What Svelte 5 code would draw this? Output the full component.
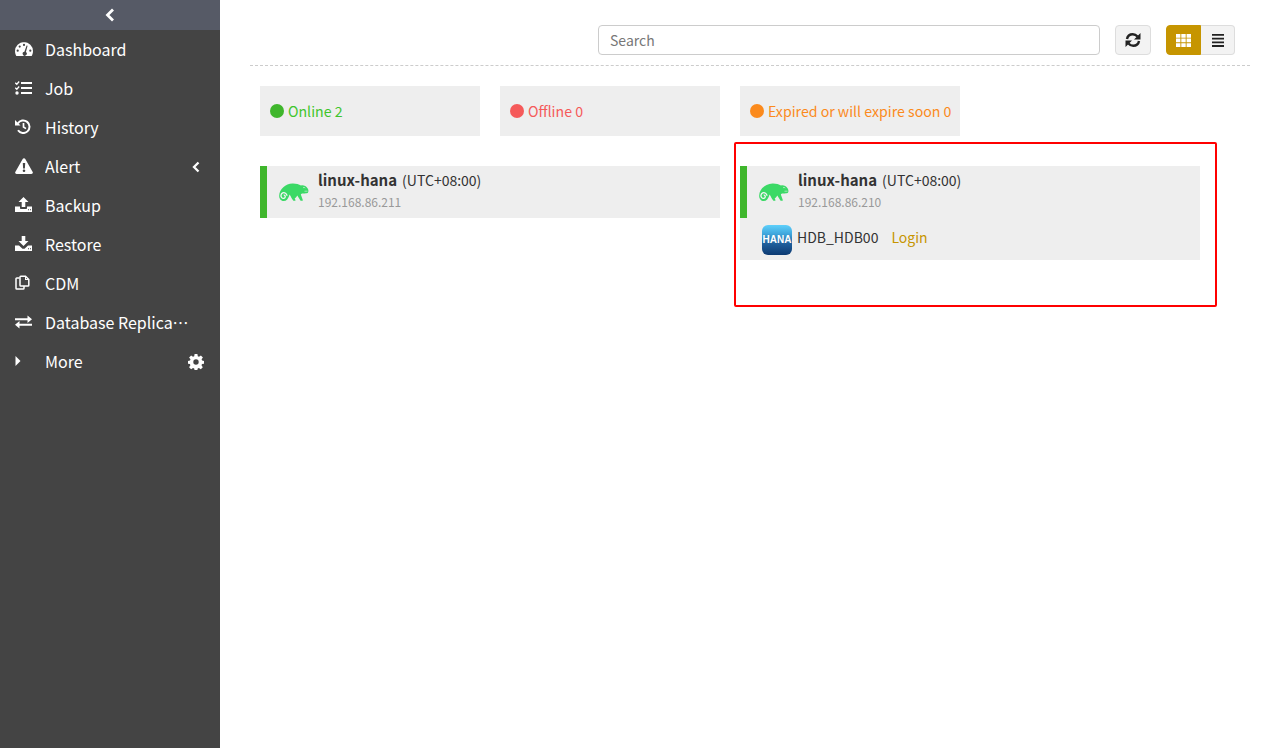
<script>
  const menu = [
    { label: 'Dashboard', icon: 'gauge' },
    { label: 'Job', icon: 'tasks' },
    { label: 'History', icon: 'history' },
    { label: 'Alert', icon: 'alert', caret: true },
    { label: 'Backup', icon: 'upload' },
    { label: 'Restore', icon: 'download' },
    { label: 'CDM', icon: 'copy' },
    { label: 'Database Replication', icon: 'swap' },
    { label: 'More', icon: 'more', gear: true }
  ];

  const stats = [
    { label: 'Online 2', color: '#3fb62c', text: '#3fc52c' },
    { label: 'Offline 0', color: '#f55a5a', text: '#f55a5a' },
    { label: 'Expired or will expire soon 0', color: '#fb8a1c', text: '#fb8a1c' }
  ];

  const hosts = [
    { name: 'linux-hana', zone: '(UTC+08:00)', ip: '192.168.86.211', apps: [] },
    { name: 'linux-hana', zone: '(UTC+08:00)', ip: '192.168.86.210', apps: ['HDB_HDB00'] }
  ];
</script>

{#snippet chameleon()}
  <svg class="gecko" viewBox="0 0 30 18" width="30" height="18" aria-hidden="true">
    <path fill="#3bd966" d="M.2 12.500C.4 6 6.500.8 13.500.5c3.500-.1 6.300.7 8.500 2 2.500-.6 5 .6 6.700 3 .9 1.300 1 3.200.2 4.300-.5.600-5.500.8-6.200.9-.8.200-1 .8-.6 1.600l1.700 4.600c.2.500 0 .8-.5.800h-1.700c-1.300-1.800-2.300-3.700-3.300-5.200-.7 1.300-1.500 2.200-2.600 3l.8 1.500c.2.400 0 .7-.5.700h-1.600c-1-1-1.900-2.600-2.600-4.200-.4-.9-.8-1.600-1.200-2.100C9.300 15.700 7.500 18 4.600 18 1.900 18 0 15.500.2 12.500z"/>
    <path fill="none" stroke="#f4f4f4" stroke-width="1.300" d="M8 12.800c-.2-2.300-2.400-3.700-4.300-2.900-1.900.8-2.300 3.300-1 4.700 1.100 1.200 3.100.9 3.500-.5.300-1.100-.5-2.200-1.500-1.900"/>
    <path fill="none" stroke="#eeeeee" stroke-width=".7" d="M24 4.800c.8-.5 1.500-.4 2.200.2"/>
    <path fill="none" stroke="#eeeeee" stroke-width=".6" d="M25.500 8.200h3"/>
  </svg>
{/snippet}

<div class="page">
  <aside class="sidebar">
    <div class="collapse">
      <svg viewBox="0 0 10 14" width="10" height="14" aria-hidden="true"><path d="M8 1.500 2.500 7 8 12.500" fill="none" stroke="#fff" stroke-width="2.800"/></svg>
    </div>
    <nav>
      {#each menu as item}
        <div class="item">
          <span class="icon">
            {#if item.icon === 'gauge'}
              <svg viewBox="0 0 18 14" width="18" height="14"><path fill="#fff" fill-rule="evenodd" d="M9 0a9 9 0 0 0-9 9c0 2 .6 3.600 1.300 5h15.400c.7-1.400 1.300-3 1.300-5a9 9 0 0 0-9-9zM9 1.800a1.100 1.100 0 1 1 0 2.200 1.100 1.100 0 0 1 0-2.200zM4.700 3.500a1.100 1.100 0 1 1 0 2.200 1.100 1.100 0 0 1 0-2.200zM2.700 7.600a1.100 1.100 0 1 1 0 2.200 1.100 1.100 0 0 1 0-2.200zM15.300 7.600a1.100 1.100 0 1 1 0 2.200 1.100 1.100 0 0 1 0-2.200zM11.600 3.400l1 .4-1.700 6.300a2 2 0 1 1-1.500-.4z"/></svg>
            {:else if item.icon === 'tasks'}
              <svg viewBox="0 0 17 14" width="17" height="14"><g fill="#fff"><path d="M6 1h11v2H6zM6 6h11v2H6zM6 11h11v2H6z"/><circle cx="2" cy="12" r="1.700"/></g><path d="M.3 1.800 1.800 3.200 4.200.5M.3 6.800 1.800 8.200 4.200 5.500" fill="none" stroke="#fff" stroke-width="1.300"/></svg>
            {:else if item.icon === 'history'}
              <svg viewBox="0 0 16 15" width="16" height="15"><path d="M2.800 4.500A6.300 6.300 0 1 1 3 11.300" fill="none" stroke="#fff" stroke-width="2"/><path fill="#fff" d="M0 1v5.500h5.500z"/><path d="M8.500 4v4l2.500 1.600" fill="none" stroke="#fff" stroke-width="1.700"/></svg>
            {:else if item.icon === 'alert'}
              <svg viewBox="0 0 18 16" width="18" height="16"><path fill="#fff" fill-rule="evenodd" d="M9 .2c.6 0 1 .3 1.300.8l7.400 12.900c.5 1-.2 2-1.300 2H1.600c-1.100 0-1.800-1-1.300-2L7.700 1c.3-.5.700-.8 1.300-.8zM7.800 5l.3 5.500h1.800l.3-5.500zM9 11.400a1.300 1.300 0 1 0 0 2.600 1.300 1.300 0 0 0 0-2.600z"/></svg>
            {:else if item.icon === 'upload'}
              <svg viewBox="0 0 17 15" width="17" height="15"><path fill="#fff" fill-rule="evenodd" d="M8.500 0 13.500 5H10.300v5H6.700V5H3.500zM0 9.500h5v1.500c0 .6.400 1 1 1h5c.6 0 1-.4 1-1V9.500h5V15H0zM13 12.200h1v1h-1zM15 12.200h1v1h-1z"/></svg>
            {:else if item.icon === 'download'}
              <svg viewBox="0 0 17 15" width="17" height="15"><path fill="#fff" fill-rule="evenodd" d="M6.700 0h3.600v5h3.200l-5 5-5-5h3.200zM0 9.500h4l3.500 3.300h2L13 9.500h4V15H0zM13 12.200h1v1h-1zM15 12.200h1v1h-1z"/></svg>
            {:else if item.icon === 'copy'}
              <svg viewBox="0 0 15 15" width="15" height="15"><path d="M4.500 3H1.800c-.5 0-.8.300-.8.800v9.400c0 .5.300.8.800.800h6.400c.5 0 .8-.3.800-.8V11" fill="none" stroke="#fff" stroke-width="1.500"/><path d="M5.800 1.200h4.700l3.300 3.300v5.700c0 .5-.3.800-.8.800H5.800c-.5 0-.8-.3-.8-.8V2c0-.5.300-.8.800-.8z" fill="none" stroke="#fff" stroke-width="1.500"/><path fill="#fff" d="M10 1h1v3h3v1h-4z"/></svg>
            {:else if item.icon === 'swap'}
              <svg viewBox="0 0 17 14" width="17" height="14"><path fill="#fff" d="M0 3.200h12.500V.5L17 4.300l-4.500 3.800V5.200H0zM17 8.800H4.500V6L0 9.800l4.500 3.700v-2.700H17z"/></svg>
            {:else}
              <svg class="tri" viewBox="0 0 6 10" width="6" height="10"><path fill="#fff" d="M.5 0 5.500 5 .5 10z"/></svg>
            {/if}
          </span>
          <span class="label">{item.label}</span>
          {#if item.caret}
            <svg class="caret" viewBox="0 0 8 12" width="8" height="12"><path d="M6.500 1.500 2 6l4.500 4.500" fill="none" stroke="#fff" stroke-width="2.300"/></svg>
          {/if}
          {#if item.gear}
            <svg class="gear" viewBox="0 0 16 16" width="16" height="16"><path fill="#fff" fill-rule="evenodd" d="M6.600 0h2.800l.4 2.200 1.200.5L12.900 1.400l2 2-1.300 1.900.5 1.200 1.900.4v2.800l-2 .4-.5 1.200 1.300 1.900-2 2-1.900-1.300-1.200.5-.4 2H6.600l-.4-2-1.200-.5-1.900 1.300-2-2 1.300-1.900-.5-1.200-1.900-.4V6.900l2-.4.500-1.200L1.100 3.400l2-2L5 2.700l1.200-.5zM8 5.300a2.700 2.700 0 1 0 0 5.400 2.700 2.700 0 0 0 0-5.400z"/></svg>
          {/if}
        </div>
      {/each}
    </nav>
  </aside>

  <main class="content">
    <div class="toolbar">
      <input class="search" type="text" placeholder="Search" />
      <button class="btn refresh" type="button" aria-label="Refresh">
        <svg viewBox="0 0 16 16" width="16" height="16"><g fill="none" stroke="#222" stroke-width="2.400"><path d="M2 7c.5-3 3-4.800 5.800-4.800 2 0 3.500.9 4.700 2.300"/><path d="M14 9c-.5 3-3 4.800-5.800 4.800-2 0-3.500-.9-4.700-2.300"/></g><path fill="#222" d="M15.500 1v6.500H9zM.5 15V8.500H7z"/></svg>
      </button>
      <div class="views">
        <button class="btn active" type="button" aria-label="Grid">
          <svg viewBox="0 0 15 13" width="15" height="13"><path fill="#fff" d="M0 0h4.400v3.700H0zM5.300 0h4.400v3.700H5.300zM10.600 0H15v3.700h-4.400zM0 4.600h4.400v3.700H0zM5.300 4.600h4.400v3.700H5.300zM10.600 4.600H15v3.700h-4.400zM0 9.200h4.400V13H0zM5.300 9.200h4.400V13H5.300zM10.600 9.200H15V13h-4.400z"/></svg>
        </button>
        <button class="btn" type="button" aria-label="List">
          <svg viewBox="0 0 12 13" width="12" height="13"><path fill="#222" d="M0 0h12v1.800H0zM0 3.700h12v1.800H0zM0 7.400h12v1.800H0zM0 11.100h12v1.800H0z"/></svg>
        </button>
      </div>
    </div>

    <div class="stats">
      {#each stats as s}
        <div class="stat" style:color={s.text}>
          <span class="dot" style:background={s.color}></span>{s.label}
        </div>
      {/each}
    </div>

    <div class="hosts">
      {#each hosts as h}
        <div class="host">
          <div class="head">
            {@render chameleon()}
            <div class="meta">
              <div class="title"><b>{h.name}</b><span>{h.zone}</span></div>
              <div class="ip">{h.ip}</div>
            </div>
          </div>
          {#each h.apps as app}
            <div class="app">
              <span class="hana">HANA</span>
              <span class="app-name">{app}</span>
              <a class="login" href="#login">Login</a>
            </div>
          {/each}
        </div>
      {/each}
    </div>
  </main>
  <div class="mark"></div>
</div>

<style>
  :global(body) {
    margin: 0;
    background: #fff;
  }

  .page {
    position: relative;
    display: flex;
    height: 748px;
    overflow: hidden;
    font-family: "Noto Sans CJK SC", "Noto Sans", sans-serif;
    font-size: 16px;
    color: #333;
  }

  .sidebar {
    flex: 0 0 220px;
    background: #444;
    color: #fff;
  }

  .collapse {
    height: 30px;
    background: #565a66;
    display: flex;
    align-items: center;
    justify-content: center;
  }

  .item {
    display: flex;
    align-items: center;
    height: 39px;
    box-sizing: border-box;
    padding: 0 0 2px 15px;
    position: relative;
  }

  .icon {
    flex: 0 0 30px;
    display: flex;
    align-items: center;
  }

  .label {
    width: 145px;
    white-space: nowrap;
    overflow: hidden;
    text-overflow: ellipsis;
  }

  .caret {
    position: absolute;
    left: 192px;
    top: 14px;
  }

  .gear {
    position: absolute;
    left: 188px;
    top: 12px;
  }

  .content {
    flex: 1;
    min-width: 0;
    padding: 25px 27px 0 30px;
  }

  .toolbar {
    display: flex;
    height: 41px;
    width: 1000px;
    padding-right: 15px;
    box-sizing: border-box;
    justify-content: flex-end;
    align-items: flex-start;
    border-bottom: 1px dashed #ccc;
  }

  .search {
    width: 502px;
    height: 30px;
    box-sizing: border-box;
    border: 1px solid #ccc;
    border-radius: 4px;
    padding: 0 11px;
    font: inherit;
    font-size: 14px;
    outline: none;
  }

  .search::placeholder {
    color: #777;
    opacity: 1;
  }

  .btn {
    width: 35px;
    height: 30px;
    box-sizing: border-box;
    padding: 0;
    border: 1px solid #ddd;
    background: #f3f3f3;
    display: flex;
    align-items: center;
    justify-content: center;
  }

  .refresh {
    width: 36px;
    margin-left: 15px;
    border-radius: 4px;
  }

  .views {
    display: flex;
    margin-left: 15px;
  }

  .views .btn:first-child {
    border-radius: 4px 0 0 4px;
  }

  .views .btn:last-child {
    width: 34px;
    border-left: 0;
    border-radius: 0 4px 4px 0;
  }

  .btn.active {
    background: #c69500;
    border-color: #c69500;
  }

  .stats {
    display: flex;
    gap: 20px;
    margin: 20px 0 0 10px;
  }

  .stat {
    width: 220px;
    height: 50px;
    background: #eee;
    display: flex;
    align-items: center;
    padding-left: 10px;
    box-sizing: border-box;
    font-size: 14.15px;
    white-space: nowrap;
  }

  .dot {
    flex: none;
    width: 14px;
    height: 14px;
    border-radius: 50%;
    margin-right: 4px;
  }

  .hosts {
    display: flex;
    gap: 20px;
    align-items: flex-start;
    margin: 30px 0 0 10px;
  }

  .host {
    width: 460px;
    background: #eee;
  }

  .head {
    height: 52px;
    box-sizing: border-box;
    border-left: 7px solid #3fb62c;
    display: flex;
    align-items: flex-start;
    padding-left: 12px;
  }

  .gecko {
    margin-top: 17px;
    flex: none;
  }

  .meta {
    margin-left: 9px;
  }

  .title {
    height: 26px;
    line-height: 28px;
    font-size: 14px;
    white-space: nowrap;
  }

  .title b {
    font-size: 15px;
    font-weight: 700;
    margin-right: 5px;
  }

  .ip {
    margin-top: 2px;
    font-size: 12px;
    line-height: 16px;
    color: #999;
  }

  .app {
    height: 42px;
    box-sizing: border-box;
    padding: 7px 0 0 22px;
    display: flex;
    align-items: flex-start;
    font-size: 14px;
  }

  .hana {
    flex: none;
    width: 30px;
    height: 30px;
    border-radius: 6px;
    background: linear-gradient(#5ed0fb 0%, #3fa6dc 30%, #1f5f9c 62%, #0d3a72 100%);
    color: #fff;
    font-family: "Liberation Sans", sans-serif;
    font-size: 10px;
    font-weight: 700;
    line-height: 30px;
    text-align: center;
    white-space: nowrap;
  }

  .app-name {
    margin-left: 5px;
    line-height: 24px;
  }

  .login {
    margin-left: 13px;
    line-height: 24px;
    color: #c69500;
    text-decoration: none;
  }

  .mark {
    position: absolute;
    left: 734px;
    top: 142px;
    width: 483px;
    height: 165px;
    box-sizing: border-box;
    border: 2px solid #f00;
    border-radius: 2px;
    pointer-events: none;
  }
</style>
